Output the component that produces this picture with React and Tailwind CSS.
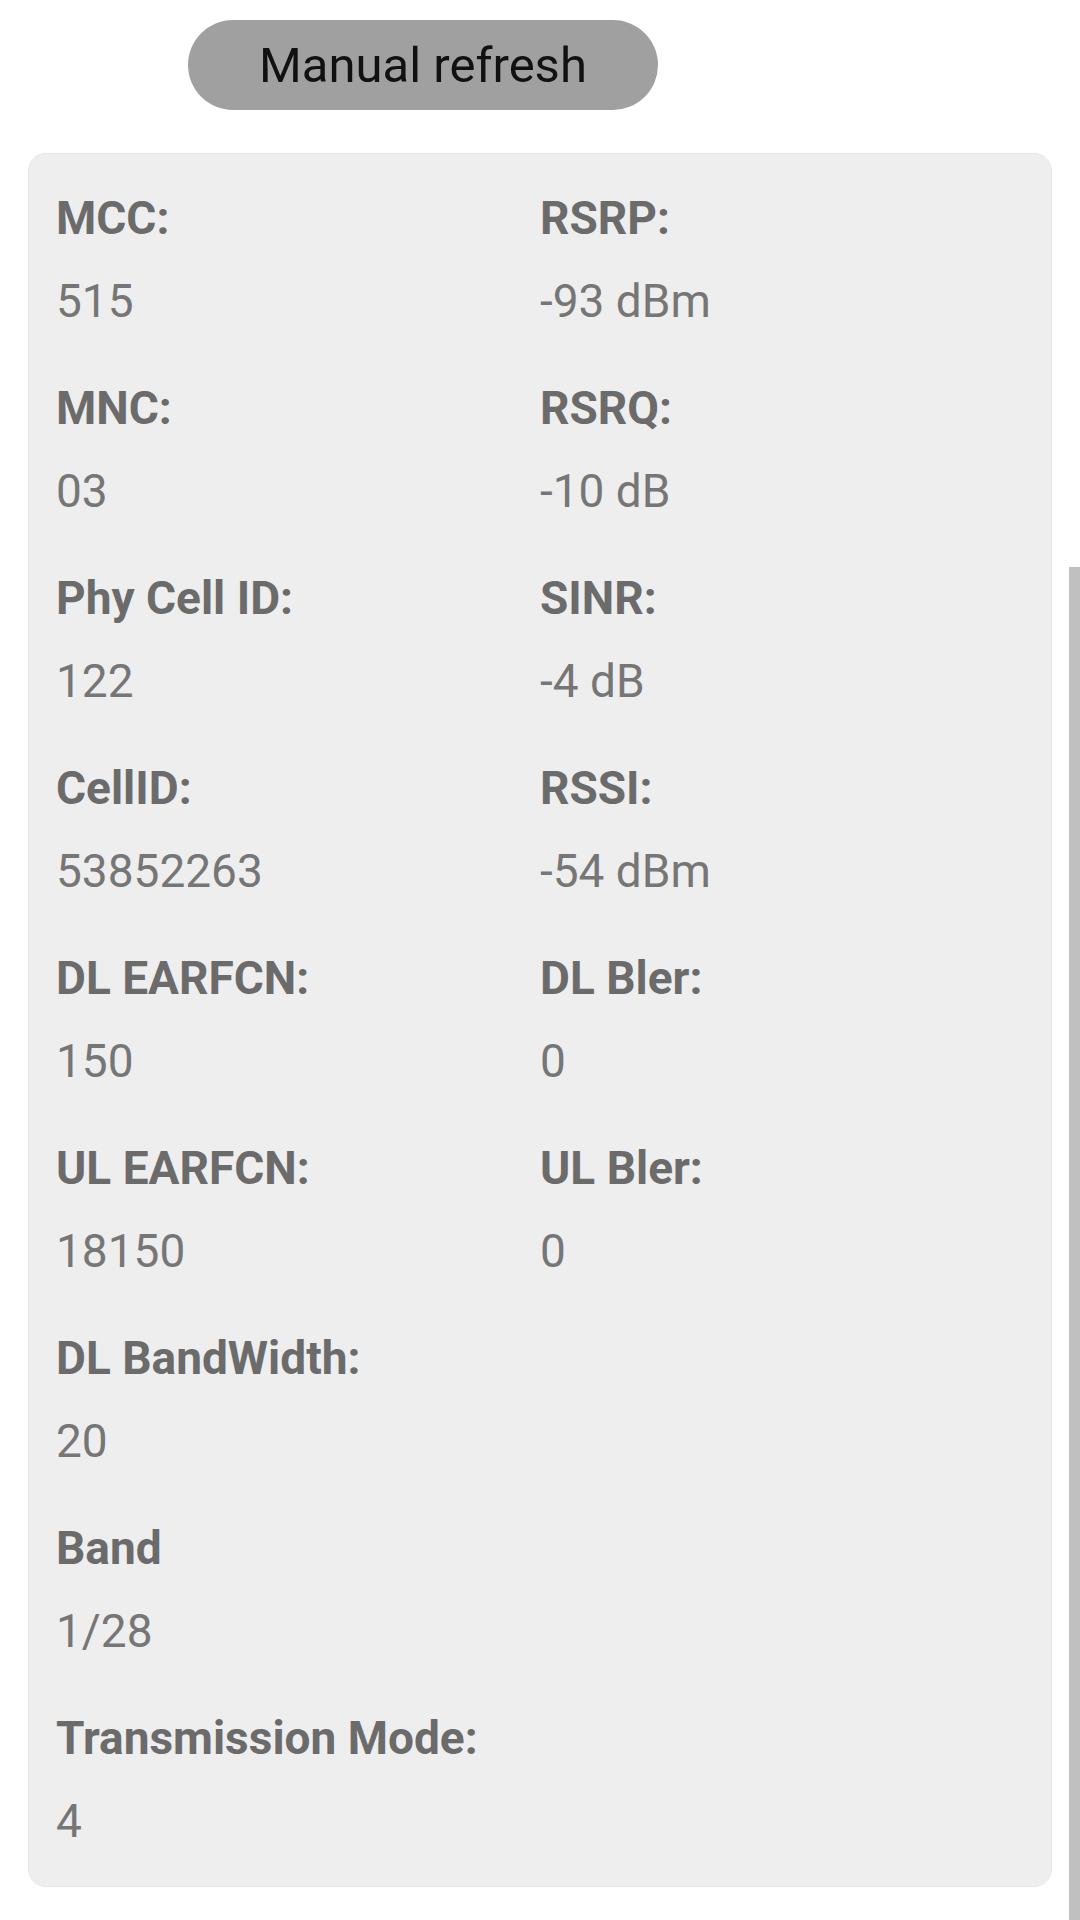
import React from "react";

const rows = [
  ["MCC:", "515", "RSRP:", "-93 dBm"],
  ["MNC:", "03", "RSRQ:", "-10 dB"],
  ["Phy Cell ID:", "122", "SINR:", "-4 dB"],
  ["CellID:", "53852263", "RSSI:", "-54 dBm"],
  ["DL EARFCN:", "150", "DL Bler:", "0"],
  ["UL EARFCN:", "18150", "UL Bler:", "0"],
  ["DL BandWidth:", "20"],
  ["Band", "1/28"],
  ["Transmission Mode:", "4"],
];

const Field = ({ label, value }) => (
  <div className="flex flex-col">
    <div className="text-[46px] leading-[54px] font-bold text-[#6b6b6b] whitespace-nowrap">{label}</div>
    <div className="mt-[29px] text-[46px] leading-[54px] text-[#767676] whitespace-nowrap">{value}</div>
  </div>
);

const App = () => {
  return (
    <div className="relative w-[1080px] h-[1920px] overflow-hidden bg-white" style={{ fontFamily: "Roboto, 'Liberation Sans', sans-serif" }}>
      <div className="pl-[188px] pt-[20px]">
        <button className="w-[470px] h-[90px] rounded-full bg-[#a0a0a0] text-[#111111] text-[49px] leading-none flex items-center justify-center">
          Manual refresh
        </button>
      </div>

      <div className="ml-[28px] mt-[43px] w-[1024px] rounded-[18px] bg-[#eeeeee] border border-[#e6e6e6] px-[27px] pt-[37px] pb-[38px]">
        <div className="grid grid-cols-2 gap-y-[53px]">
          {rows.map((r, i) => (
            <React.Fragment key={i}>
              <Field label={r[0]} value={r[1]} />
              {r[2] ? <Field label={r[2]} value={r[3]} /> : <div />}
            </React.Fragment>
          ))}
        </div>
      </div>

      {/* scrollbar thumb */}
      <div className="absolute left-[1067px] top-[565px] w-[13px] h-[1355px] bg-white pl-[2px] pt-[2px]">
        <div className="w-full h-full bg-[#c0c0c0]" />
      </div>
    </div>
  );
};

export default App;
